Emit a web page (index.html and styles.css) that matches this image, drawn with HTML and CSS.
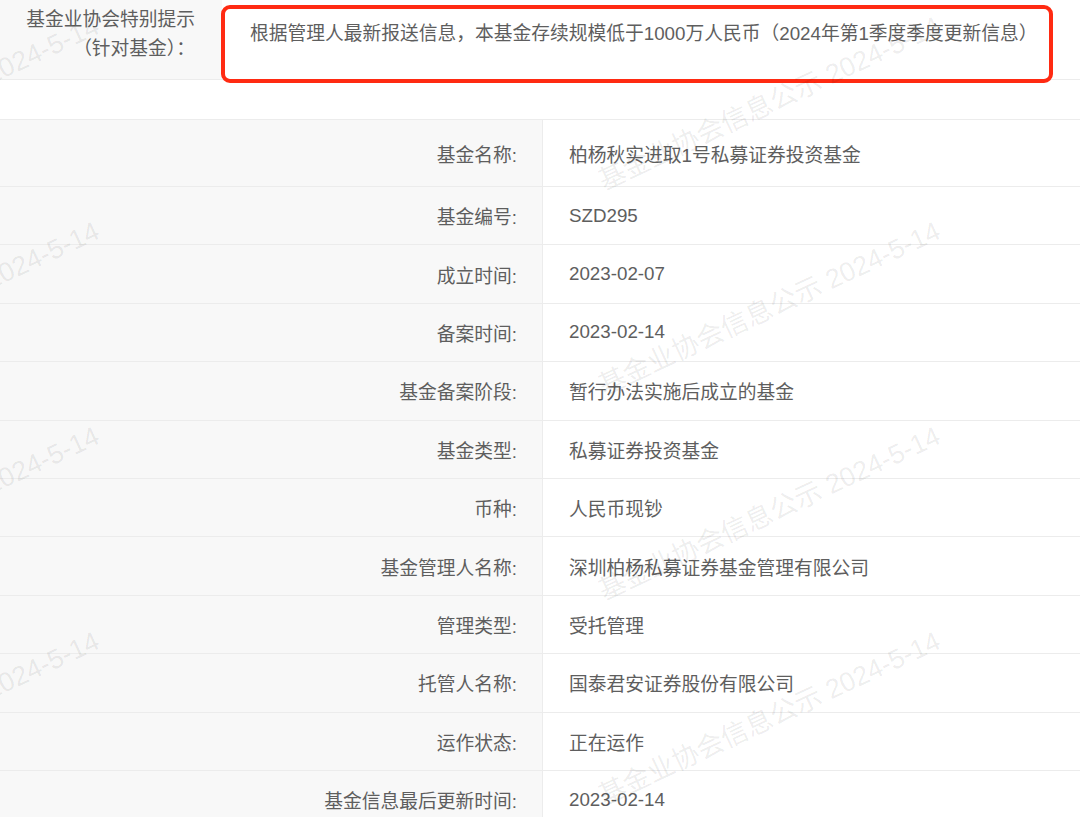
FILE: index.html
```html
<!DOCTYPE html>
<html lang="zh-CN">
<head>
    <meta charset="UTF-8">
    <meta name="viewport" content="width=device-width, initial-scale=1.0">
    <title>基金公示信息</title>
    <link rel="stylesheet" href="styles.css">
</head>
<body>

    <!-- 特别提示 -->
    <div class="notice">
        <div class="notice-label">基金业协会特别提示<br>（针对基金）：</div>
        <div class="notice-text">根据管理人最新报送信息，本基金存续规模低于1000万人民币（2024年第1季度季度更新信息）</div>
        <div class="highlight"></div>
    </div>

    <!-- 基金信息 -->
    <div class="info-table">
        <div class="row first">
            <div class="label">基金名称:</div>
            <div class="value">柏杨秋实进取1号私募证券投资基金</div>
        </div>
        <div class="row">
            <div class="label">基金编号:</div>
            <div class="value">SZD295</div>
        </div>
        <div class="row">
            <div class="label">成立时间:</div>
            <div class="value">2023-02-07</div>
        </div>
        <div class="row">
            <div class="label">备案时间:</div>
            <div class="value">2023-02-14</div>
        </div>
        <div class="row">
            <div class="label">基金备案阶段:</div>
            <div class="value">暂行办法实施后成立的基金</div>
        </div>
        <div class="row">
            <div class="label">基金类型:</div>
            <div class="value">私募证券投资基金</div>
        </div>
        <div class="row">
            <div class="label">币种:</div>
            <div class="value">人民币现钞</div>
        </div>
        <div class="row">
            <div class="label">基金管理人名称:</div>
            <div class="value">深圳柏杨私募证券基金管理有限公司</div>
        </div>
        <div class="row">
            <div class="label">管理类型:</div>
            <div class="value">受托管理</div>
        </div>
        <div class="row">
            <div class="label">托管人名称:</div>
            <div class="value">国泰君安证券股份有限公司</div>
        </div>
        <div class="row">
            <div class="label">运作状态:</div>
            <div class="value">正在运作</div>
        </div>
        <div class="row">
            <div class="label">基金信息最后更新时间:</div>
            <div class="value">2023-02-14</div>
        </div>
    </div>

    <!-- 水印 -->
    <div class="watermarks">
        <span class="wm wm-l1">基金业协会信息公示 2024-5-14</span>
        <span class="wm wm-l2">基金业协会信息公示 2024-5-14</span>
        <span class="wm wm-l3">基金业协会信息公示 2024-5-14</span>
        <span class="wm wm-l4">基金业协会信息公示 2024-5-14</span>
        <span class="wm wm-r1">基金业协会信息公示 2024-5-14</span>
        <span class="wm wm-r2">基金业协会信息公示 2024-5-14</span>
        <span class="wm wm-r3">基金业协会信息公示 2024-5-14</span>
        <span class="wm wm-r4">基金业协会信息公示 2024-5-14</span>
    </div>

</body>
</html>
```

FILE: styles.css
```css
body {
    font-family: "Liberation Sans", "Noto Sans CJK SC", sans-serif;
    font-size: 18.75px;
    color: #5e5e5e;
    background-color: #fff;
    margin: 0;
    padding: 0;
    overflow: hidden;
}

.notice {
    position: relative;
    display: flex;
    height: 79px;
    border-bottom: 1px solid #ececec;
}

.notice-label {
    width: 222px;
    box-sizing: border-box;
    padding: 5px 27px 0 0;
    text-align: right;
    line-height: 29px;
    background-color: #f8f8f8;
}

.notice-text {
    flex: 1;
    padding: 19px 0 0 28px;
    line-height: 29px;
    white-space: nowrap;
}

/* 红框标注 */
.highlight {
    position: absolute;
    left: 221px;
    top: 5px;
    width: 832px;
    height: 78px;
    box-sizing: border-box;
    border: 4px solid #ff2a12;
    border-radius: 9px;
}

.info-table {
    margin-top: 39px;
    border-top: 1px solid #ececec;
}

.row {
    display: flex;
    height: 58.4px;
    box-sizing: border-box;
    border-bottom: 1px solid #ececec;
}

.row.first {
    height: 67px;
}

.label {
    width: 543px;
    box-sizing: border-box;
    padding-right: 25px;
    border-right: 1px solid #ececec;
    background-color: #f8f8f8;
    display: flex;
    align-items: center;
    justify-content: flex-end;
}

.value {
    flex: 1;
    padding-left: 26px;
    display: flex;
    align-items: center;
}

.watermarks {
    position: absolute;
    top: 0;
    left: 0;
    width: 1080px;
    height: 817px;
    pointer-events: none;
    overflow: hidden;
}

.wm {
    position: absolute;
    font-size: 27px;
    line-height: 27px;
    white-space: nowrap;
    color: rgba(0, 0, 0, 0.08);
    transform-origin: 0 100%;
    transform: rotate(-25deg);
}

.wm-l1 { left: -235px; top: 168px; }
.wm-l2 { left: -235px; top: 373px; }
.wm-l3 { left: -235px; top: 578px; }
.wm-l4 { left: -235px; top: 783px; }
.wm-r1 { left: 606px; top: 168px; }
.wm-r2 { left: 606px; top: 373px; }
.wm-r3 { left: 606px; top: 578px; }
.wm-r4 { left: 606px; top: 783px; }
```
